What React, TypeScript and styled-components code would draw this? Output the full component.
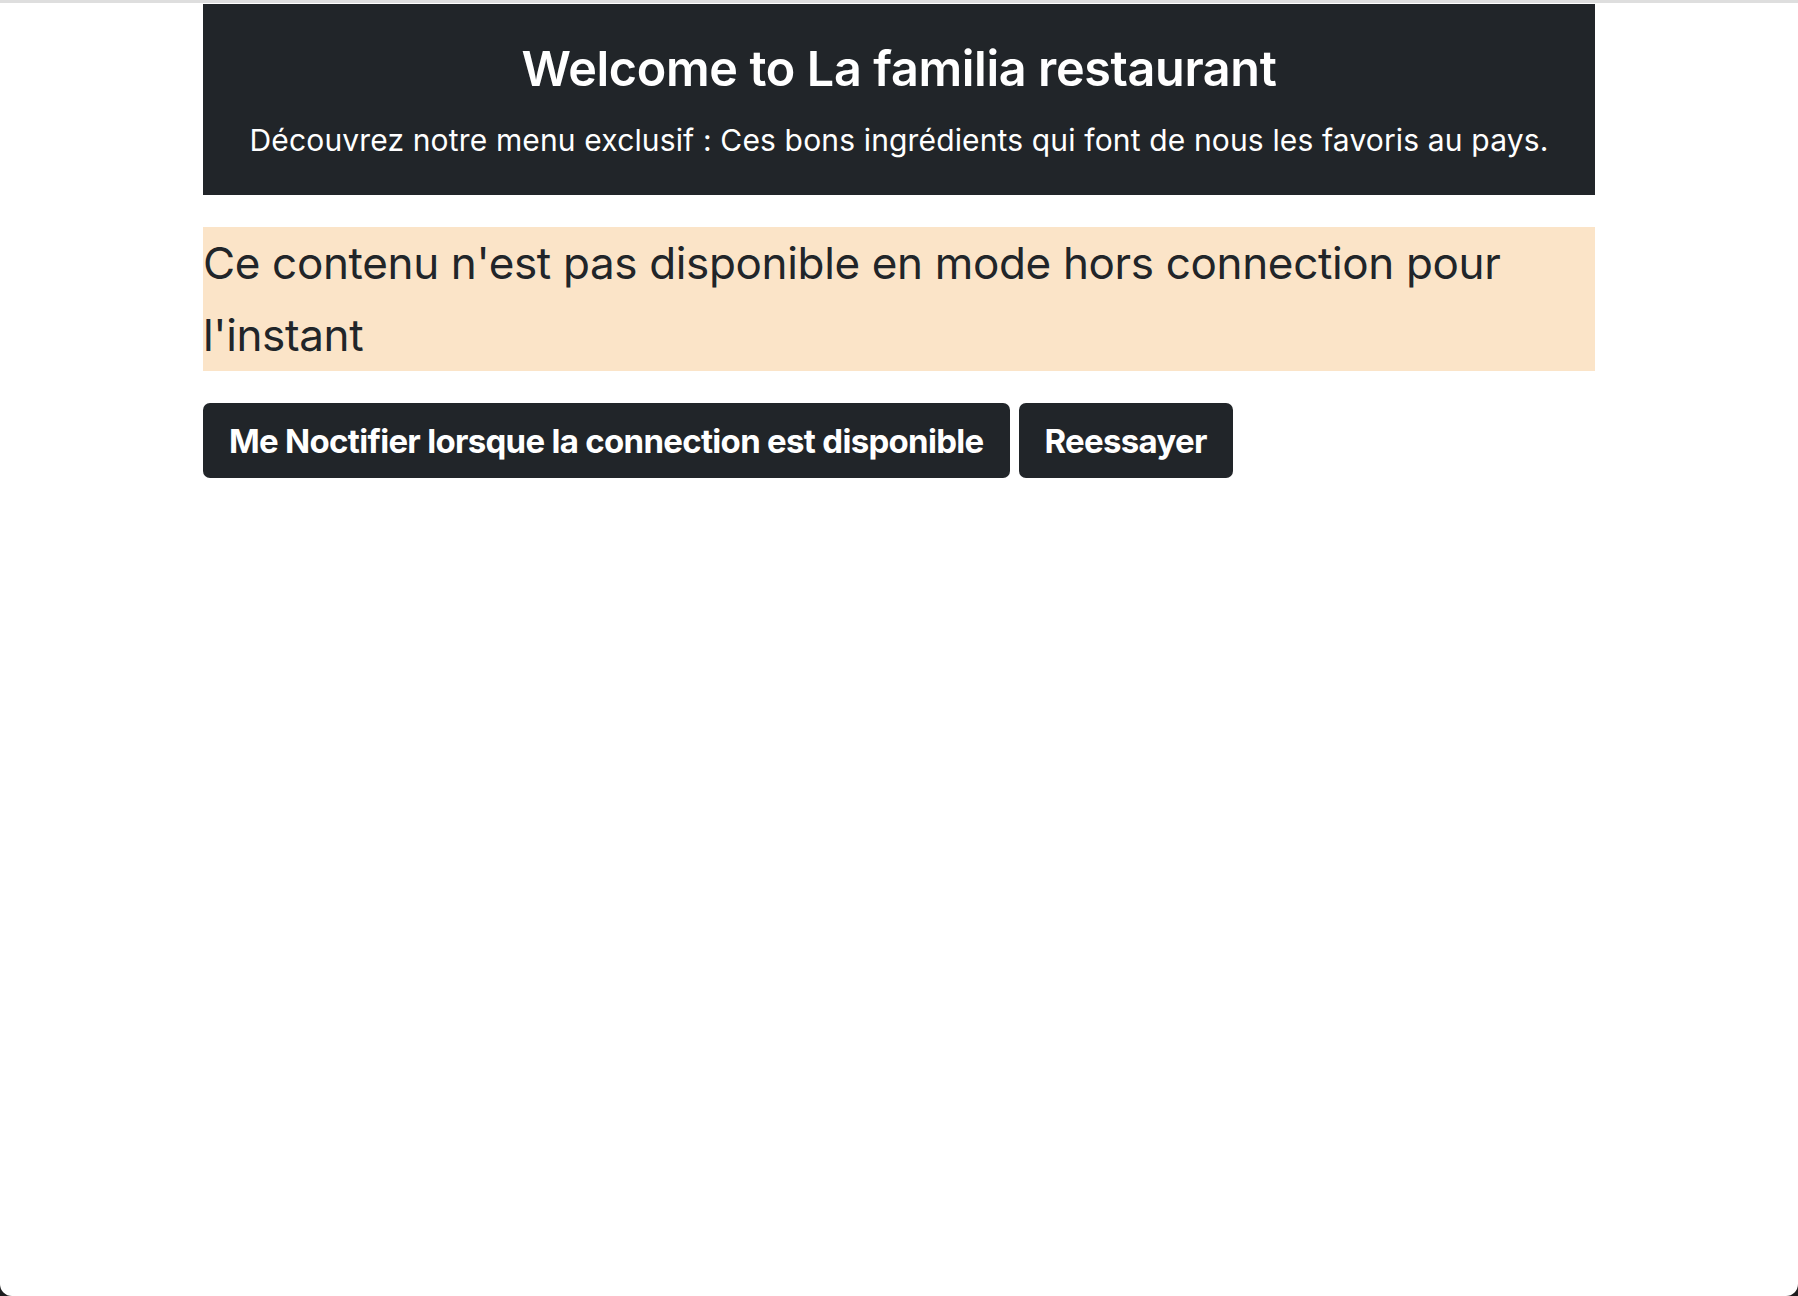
import React from "react";
import styled, { createGlobalStyle } from "styled-components";

const GlobalStyle = createGlobalStyle`
  html, body {
    margin: 0;
    padding: 0;
    background: #1d1d1f;
  }
  body {
    font-family: Inter, "Noto Sans", "Liberation Sans", sans-serif;
    color: #212529;
  }
  * { box-sizing: border-box; }
`;

const Frame = styled.div`
  min-height: 1296px;
  background: #ffffff;
  border-bottom-left-radius: 12px;
  border-bottom-right-radius: 12px;
  border-top: 3px solid #dedede;
  padding-top: 1px;
`;

const Container = styled.main`
  width: 1392px;
  margin: 0 auto;
  display: flex;
  flex-direction: column;
`;

const Hero = styled.header`
  height: 191px;
  background: #212529;
  color: #ffffff;
  display: flex;
  flex-direction: column;
  align-items: center;
  padding-top: 36px;
`;

const Title = styled.h1`
  margin: 0;
  font-size: 48.5px;
  line-height: 1.2;
  font-weight: 600;
  letter-spacing: -0.35px;
`;

const Lead = styled.p`
  margin: 20px 0 0;
  font-size: 30px;
  line-height: 1.5;
  font-weight: 400;
  letter-spacing: 0.15px;
`;

const Notice = styled.div`
  margin-top: 32px;
  background: #fbe4c8;
  font-size: 44px;
  line-height: 72px;
  font-weight: 400;
  letter-spacing: -0.35px;
  padding-right: 80px;
`;

const Actions = styled.div`
  margin-top: 32px;
  display: flex;
  gap: 9px;
`;

const Button = styled.button`
  height: 75px;
  padding: 0 26px;
  border: none;
  border-radius: 7px;
  background: #212529;
  color: #ffffff;
  font-family: Inter, "Noto Sans", "Liberation Sans", sans-serif;
  font-size: 33px;
  font-weight: 700;
  letter-spacing: -0.7px;
  display: flex;
  align-items: center;
  cursor: pointer;
`;

export default function App() {
  return (
    <>
      <GlobalStyle />
      <Frame>
        <Container>
          <Hero>
            <Title>Welcome to La familia restaurant</Title>
            <Lead>
              Découvrez notre menu exclusif : Ces bons ingrédients qui font de nous les favoris au pays.
            </Lead>
          </Hero>
          <Notice>
            Ce contenu n'est pas disponible en mode hors connection pour l'instant
          </Notice>
          <Actions>
            <Button>Me Noctifier lorsque la connection est disponible</Button>
            <Button>Reessayer</Button>
          </Actions>
        </Container>
      </Frame>
    </>
  );
}
